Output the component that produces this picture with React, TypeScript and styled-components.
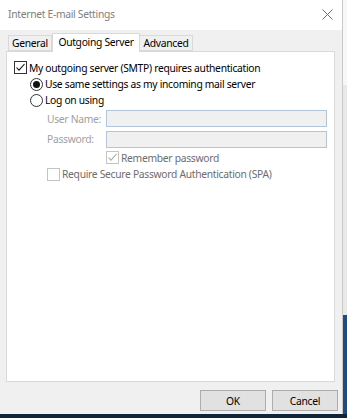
import styled, { createGlobalStyle } from "styled-components";

const GlobalStyle = createGlobalStyle`
  html, body {
    margin: 0;
    padding: 0;
    background: #0f2338;
  }
  * {
    box-sizing: border-box;
  }
`;

const font = `"Noto Sans", "Open Sans", "Liberation Sans", sans-serif`;

const CheckMark = ({ color }: { color: string }) => (
  <svg width="11" height="11" viewBox="0 0 11 11">
    <polyline
      points="1.5,5.5 4,8.2 9.5,2"
      fill="none"
      stroke={color}
      strokeWidth="1.1"
    />
  </svg>
);

interface CheckProps {
  checked?: boolean;
  disabled?: boolean;
}

const Checkbox = ({ checked, disabled }: CheckProps) => (
  <CheckBoxBox $disabled={disabled}>
    {checked && <CheckMark color={disabled ? "#a8a8a8" : "#111"} />}
  </CheckBoxBox>
);

const Radio = ({ checked }: { checked?: boolean }) => (
  <RadioCircle>{checked && <RadioDot />}</RadioCircle>
);

const App = () => {
  return (
    <Screen>
      <GlobalStyle />
      <Desktop>
        <Window>
          <TitleBar>
            <Title>Internet E-mail Settings</Title>
            <CloseButton>
              <svg width="11" height="11" viewBox="0 0 11 11">
                <path d="M0.5 0.5 L10.5 10.5 M10.5 0.5 L0.5 10.5" stroke="#6a6a6a" strokeWidth="1" />
              </svg>
            </CloseButton>
          </TitleBar>
          <Body>
            <TabRow>
              <Tab $width={44}>General</Tab>
              <Tab $width={88} $active>
                Outgoing Server
              </Tab>
              <Tab $width={53}>Advanced</Tab>
            </TabRow>
            <Panel>
              <Row $height={17}>
                <Checkbox checked />
                <Label>My outgoing server (SMTP) requires authentication</Label>
              </Row>
              <Row $height={16} $indent={16}>
                <Radio checked />
                <Label>Use same settings as my incoming mail server</Label>
              </Row>
              <Row $height={16} $indent={16}>
                <Radio />
                <Label>Log on using</Label>
              </Row>
              <Row $height={21} $indent={33}>
                <FieldLabel>User Name:</FieldLabel>
                <TextInput />
              </Row>
              <Row $height={20} $indent={33}>
                <FieldLabel>Password:</FieldLabel>
                <TextInput />
              </Row>
              <Row $height={17} $indent={92}>
                <Checkbox checked disabled />
                <Label $muted>Remember password</Label>
              </Row>
              <Row $height={16} $indent={33}>
                <Checkbox disabled />
                <Label $muted>Require Secure Password Authentication (SPA)</Label>
              </Row>
            </Panel>
            <Footer>
              <Button>OK</Button>
              <Button>Cancel</Button>
            </Footer>
          </Body>
        </Window>
        <BehindStrip>
          <StripTop />
          <StripMiddle />
          <StripBlue />
        </BehindStrip>
      </Desktop>
      <Taskbar />
    </Screen>
  );
};

const Screen = styled.div`
  width: 347px;
  height: 418px;
  display: flex;
  flex-direction: column;
  overflow: hidden;
  font-family: ${font};
  font-size: 10.3px;
  letter-spacing: -0.3px;
`;

const Desktop = styled.div`
  display: flex;
  height: 414px;
`;

const Window = styled.div`
  width: 343px;
  height: 100%;
  background: #f0f0f0;
  border-right: 1px solid #c9c9c9;
  display: flex;
  flex-direction: column;
`;

const TitleBar = styled.div`
  height: 30px;
  background: #ffffff;
  padding: 0 9px 2px 8px;
  display: flex;
  align-items: center;
  justify-content: space-between;
`;

const Title = styled.div`
  color: #808080;
`;

const CloseButton = styled.div`
  width: 11px;
  height: 11px;
  display: flex;
`;

const Body = styled.div`
  flex: 1;
  padding: 3px 7px 0 6px;
  display: flex;
  flex-direction: column;
`;

const TabRow = styled.div`
  height: 18px;
  padding-left: 2px;
  display: flex;
  align-items: flex-end;
`;

const Tab = styled.div<{ $width: number; $active?: boolean }>`
  width: ${(p) => p.$width}px;
  height: ${(p) => (p.$active ? 19 : 16)}px;
  margin-bottom: ${(p) => (p.$active ? -1 : 0)}px;
  position: relative;
  z-index: ${(p) => (p.$active ? 1 : 0)};
  background: ${(p) => (p.$active ? "#ffffff" : "#f0f0f0")};
  border: 1px solid #d9d9d9;
  border-bottom: ${(p) => (p.$active ? "none" : "1px solid #d9d9d9")};
  border-left: ${(p) => (p.$active ? "1px solid #d9d9d9" : "none")};
  color: #000;
  display: flex;
  align-items: center;
  justify-content: center;
  padding-bottom: ${(p) => (p.$active ? 2 : 0)}px;
  &:first-child {
    border-left: 1px solid #d9d9d9;
  }
`;

const Panel = styled.div`
  height: 331px;
  background: #ffffff;
  border: 1px solid #d9d9d9;
  padding: 7px 7px 0 7px;
  display: flex;
  flex-direction: column;
`;

const Row = styled.div<{ $height: number; $indent?: number }>`
  height: ${(p) => p.$height}px;
  padding-left: ${(p) => p.$indent ?? 0}px;
  display: flex;
  align-items: center;
`;

const CheckBoxBox = styled.div<{ $disabled?: boolean }>`
  width: 13px;
  height: 13px;
  flex-shrink: 0;
  border: 1px solid ${(p) => (p.$disabled ? "#c4c4c4" : "#333333")};
  background: #ffffff;
  display: flex;
  align-items: center;
  justify-content: center;
`;

const RadioCircle = styled.div`
  width: 13px;
  height: 13px;
  flex-shrink: 0;
  border: 1px solid #333333;
  border-radius: 50%;
  background: #ffffff;
  display: flex;
  align-items: center;
  justify-content: center;
`;

const RadioDot = styled.div`
  width: 7px;
  height: 7px;
  border-radius: 50%;
  background: #111111;
`;

const Label = styled.span<{ $muted?: boolean }>`
  margin-left: 2px;
  color: ${(p) => (p.$muted ? "#6d6d6d" : "#000000")};
  white-space: nowrap;
`;

const FieldLabel = styled.span`
  width: 59px;
  color: #a0a0a0;
  white-space: nowrap;
`;

const TextInput = styled.div`
  width: 223px;
  height: 17px;
  background: #f0f0f0;
  border: 1px solid #b3c6d9;
`;

const Footer = styled.div`
  display: flex;
  justify-content: flex-end;
  gap: 6px;
  padding-top: 8px;
  margin-right: -3px;
`;

const Button = styled.div`
  width: 66px;
  height: 21px;
  background: #e1e1e1;
  border: 1px solid #adadad;
  color: #000;
  display: flex;
  align-items: center;
  justify-content: center;
`;

const BehindStrip = styled.div`
  flex: 1;
  display: flex;
  flex-direction: column;
`;

const StripTop = styled.div`
  height: 85px;
  background: #f7f7f7;
`;

const StripMiddle = styled.div`
  height: 230px;
  background: #e9e9e9;
`;

const StripBlue = styled.div`
  flex: 1;
  background: #1d4c84;
`;

const Taskbar = styled.div`
  flex: 1;
  background: #10253c;
`;

export default App;
